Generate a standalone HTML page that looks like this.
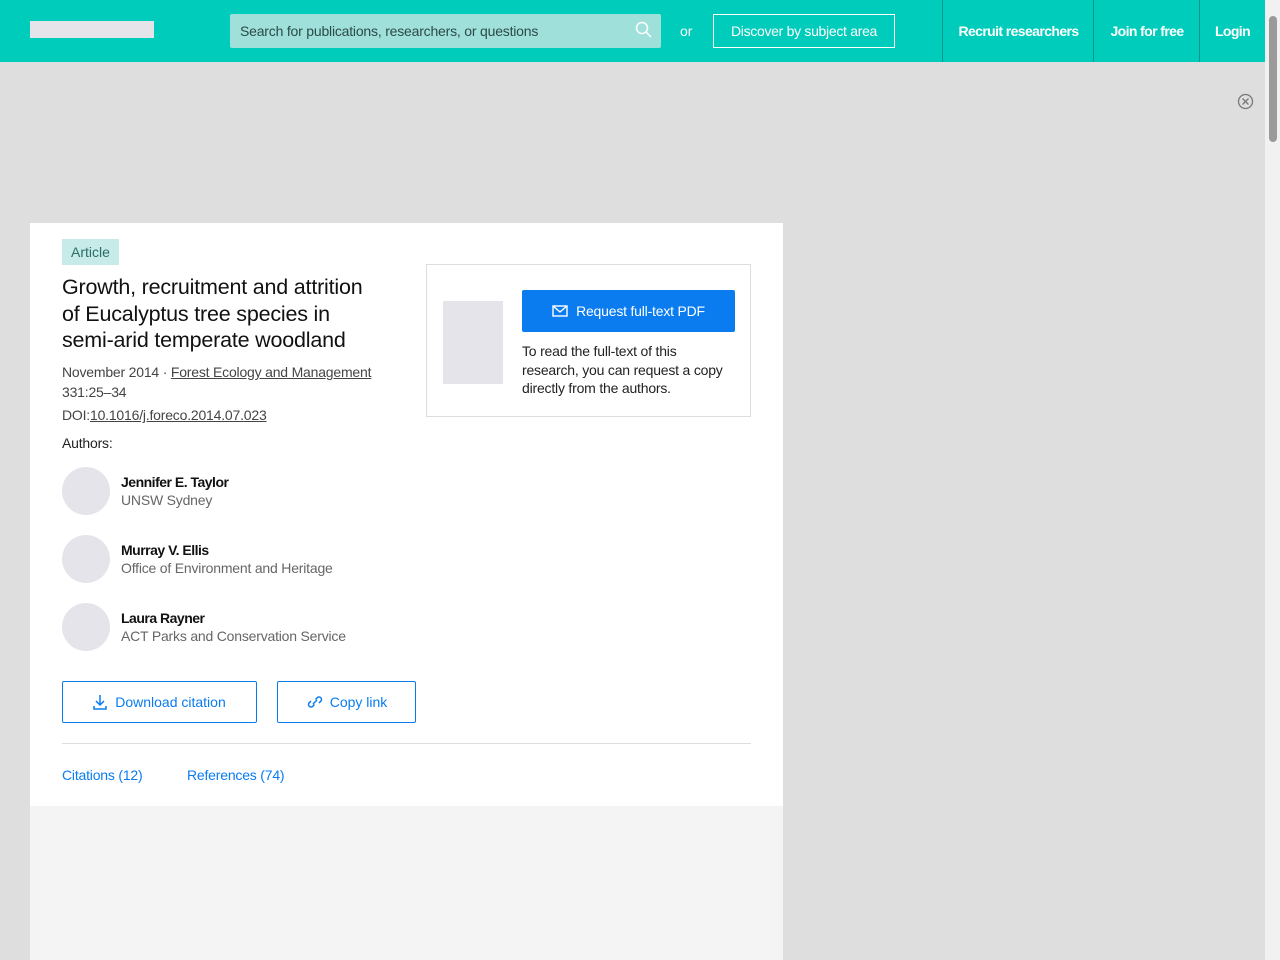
<!DOCTYPE html>
<html><head><style>
*{box-sizing:border-box;margin:0;padding:0}
body{width:1280px;height:960px;overflow:hidden;background:#dedede;font-family:"Liberation Sans",sans-serif;position:relative}
.hdr{position:absolute;left:0;top:0;width:1265px;height:62px;background:#00ccbb}
.logo{position:absolute;left:30px;top:21px;width:124px;height:17px;background:#e4e4ea}
.search{position:absolute;left:230px;top:14px;width:431px;height:34px;background:#9fe0da;border-radius:2px;font-size:14px;color:#2c4a47;padding:9px 10px;letter-spacing:-0.2px}
.or{position:absolute;left:680px;top:23px;color:#fff;font-size:14px}
.disc{position:absolute;left:713px;top:14px;width:182px;height:34px;border:1px solid #fff;color:#fff;font-size:14px;text-align:center;line-height:32px;letter-spacing:-0.3px}
.nav{position:absolute;top:0;height:62px;border-left:1px solid #06958a;color:#fff;font-weight:bold;font-size:14px;line-height:62px;text-align:center;letter-spacing:-0.6px}
.sb{position:absolute;right:0;top:0;width:15px;height:960px;background:#f1f1f1}
.sbt{position:absolute;right:3px;top:16px;width:8px;height:126px;background:#9a9a9a;border-radius:4px}
.card{position:absolute;left:30px;top:223px;width:753px;height:583px;background:#fff}
.grey{position:absolute;left:30px;top:806px;width:753px;height:154px;background:#f4f4f4}
.tag{position:absolute;left:62px;top:239px;width:57px;height:26px;background:#c6ebe8;color:#2b6d66;font-size:14px;line-height:26px;text-align:center}
h1{position:absolute;left:62px;top:274px;width:322px;font-size:21.5px;font-weight:normal;line-height:26.5px;color:#111;letter-spacing:-0.2px}
.meta{position:absolute;left:62px;font-size:14px;color:#444;letter-spacing:-0.2px}
.meta u{color:#444}
.av{position:absolute;left:62px;width:48px;height:48px;border-radius:50%;background:#e4e4ea}
.an{position:absolute;left:121px;font-size:14px;color:#111;font-weight:bold;letter-spacing:-0.5px}
.af{position:absolute;left:121px;font-size:14px;color:#666;letter-spacing:-0.2px}
.btn{position:absolute;top:681px;height:42px;border:1px solid #0a7cf0;border-radius:2px;color:#0a7cf0;font-size:14px;line-height:40px;text-align:center}
.hr{position:absolute;left:62px;top:743px;width:689px;height:1px;background:#ddd}
.tab{position:absolute;top:767px;color:#0a7cf0;font-size:14px;letter-spacing:-0.2px}
.box{position:absolute;left:426px;top:264px;width:325px;height:153px;border:1px solid #ddd}
.thumb{position:absolute;left:443px;top:301px;width:60px;height:83px;background:#e4e4ea}
.req{position:absolute;left:522px;top:290px;width:213px;height:42px;background:#0a7cf0;color:#fff;font-size:14px;line-height:42px;text-align:center;border-radius:2px;letter-spacing:-0.2px}
.rt{position:absolute;left:522px;top:342px;width:205px;font-size:14px;line-height:18.5px;color:#222;letter-spacing:-0.2px}
</style></head><body>
<div class="hdr">
<div class="logo"></div>
<div class="search">Search for publications, researchers, or questions
<svg style="position:absolute;right:8px;top:7px" width="18" height="18" viewBox="0 0 18 18"><circle cx="7" cy="7" r="5.5" fill="none" stroke="#fff" stroke-width="1.5"/><path d="M11 11l5 5" stroke="#fff" stroke-width="1.5"/></svg></div>
<div class="or">or</div>
<div class="disc">Discover by subject area</div>
<div class="nav" style="left:942px;width:152px">Recruit researchers</div>
<div class="nav" style="left:1093px;width:107px">Join for free</div>
<div class="nav" style="left:1199px;width:66px">Login</div>
</div>
<div class="sb"><div class="sbt"></div></div>
<svg style="position:absolute;left:1237px;top:93px" width="17" height="17" viewBox="0 0 17 17"><circle cx="8.5" cy="8.5" r="7" fill="none" stroke="#777" stroke-width="1.3"/><path d="M5.5 5.5l6 6M11.5 5.5l-6 6" stroke="#777" stroke-width="1.3"/></svg>
<div class="card"></div>
<div class="grey"></div>
<div class="tag">Article</div>
<h1>Growth, recruitment and attrition of Eucalyptus tree species in semi-arid temperate woodland</h1>
<div class="meta" style="top:364px">November 2014 · <u>Forest Ecology and Management</u></div>
<div class="meta" style="top:384px">331:25–34</div>
<div class="meta" style="top:407px">DOI:<u>10.1016/j.foreco.2014.07.023</u></div>
<div class="meta" style="top:435px;color:#222">Authors:</div>
<div class="av" style="top:467px"></div><div class="an" style="top:474px">Jennifer E. Taylor</div><div class="af" style="top:492px">UNSW Sydney</div>
<div class="av" style="top:535px"></div><div class="an" style="top:542px">Murray V. Ellis</div><div class="af" style="top:560px">Office of Environment and Heritage</div>
<div class="av" style="top:603px"></div><div class="an" style="top:610px">Laura Rayner</div><div class="af" style="top:628px">ACT Parks and Conservation Service</div>
<div class="btn" style="left:62px;width:195px"><svg width="14" height="16" viewBox="0 0 14 16" style="vertical-align:-3px;margin-right:8px"><path d="M7 1v10M3 7l4 4 4-4M1 12v3h12v-3" fill="none" stroke="#0a7cf0" stroke-width="1.5"/></svg>Download citation</div>
<div class="btn" style="left:277px;width:139px"><svg width="18" height="14" viewBox="0 0 18 14" style="vertical-align:-2px;margin-right:6px"><path d="M7 9l4-4M5 6l-2 2a2.5 2.5 0 0 0 3.5 3.5l2-2M13 8l2-2a2.5 2.5 0 0 0-3.5-3.5l-2 2" fill="none" stroke="#0a7cf0" stroke-width="1.5"/></svg>Copy link</div>
<div class="hr"></div>
<div class="tab" style="left:62px">Citations (12)</div>
<div class="tab" style="left:187px">References (74)</div>
<div class="box"></div>
<div class="thumb"></div>
<div class="req"><svg width="16" height="12" viewBox="0 0 16 12" style="vertical-align:-1px;margin-right:8px"><rect x="1" y="1" width="14" height="10" fill="none" stroke="#fff" stroke-width="1.4"/><path d="M1 1l7 6 7-6" fill="none" stroke="#fff" stroke-width="1.4"/></svg>Request full-text PDF</div>
<div class="rt">To read the full-text of this research, you can request a copy directly from the authors.</div>
</body></html>
